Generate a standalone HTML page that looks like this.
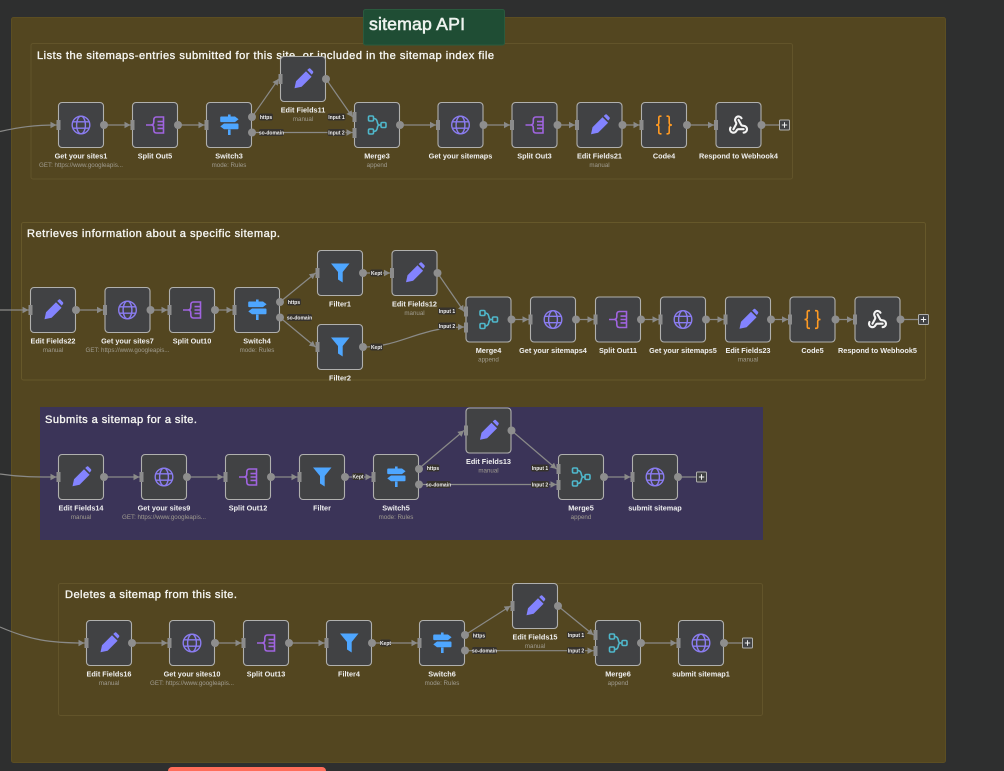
<!DOCTYPE html>
<html><head><meta charset="utf-8"><title>sitemap API</title>
<style>
html,body{margin:0;padding:0;background:#2e2f2f;width:1004px;height:771px;overflow:hidden}
svg{display:block}
text{font-family:"Liberation Sans",sans-serif}
.l{font-size:7.3px;font-weight:bold;fill:#f0f0f0;text-anchor:middle}
.s{font-size:6.2px;fill:#a09c90;text-anchor:middle}
.t{font-size:11.1px;fill:#f6f6f2;stroke:#f6f6f2;stroke-width:.35}
.p{font-size:5px;font-weight:bold;fill:#f0f0f0;text-anchor:middle}
.e{fill:none;stroke:#8a8a88;stroke-width:1.2;marker-end:url(#a)}
.x{fill:none;stroke:#8a8a88;stroke-width:1.2}
.r{fill:#36322c}
</style></head><body>
<svg width="1004" height="771" viewBox="0 0 1004 771" xmlns="http://www.w3.org/2000/svg">
<defs>
<marker id="a" markerUnits="userSpaceOnUse" markerWidth="6" markerHeight="7" refX="6" refY="3.5" orient="auto"><path d="M0 .3L6 3.5L0 6.700z" fill="#8a8a88"/></marker>
<g id="n">
<rect x=".5" y=".5" width="45" height="45" rx="3.5" fill="#414244" stroke="#b0b0ae" stroke-width="1.1"/>
<rect x="-1.5" y="18" width="4" height="10" fill="#8c8c8c"/>
<circle cx="46" cy="23" r="4" fill="#8e8e8e"/>
</g>
<g id="n2">
<rect x=".5" y=".5" width="45" height="45" rx="3.5" fill="#414244" stroke="#b0b0ae" stroke-width="1.1"/>
<rect x="-1.5" y="18" width="4" height="10" fill="#8c8c8c"/>
<circle cx="46" cy="15" r="4" fill="#8e8e8e"/>
<circle cx="46" cy="30.5" r="4" fill="#8e8e8e"/>
</g>
<g id="n3">
<rect x=".5" y=".5" width="45" height="45" rx="3.5" fill="#414244" stroke="#b0b0ae" stroke-width="1.1"/>
<rect x="-1.5" y="10" width="4" height="10" fill="#8c8c8c"/>
<rect x="-1.5" y="26" width="4" height="10" fill="#8c8c8c"/>
<circle cx="46" cy="23" r="4" fill="#8e8e8e"/>
</g>
<g id="G"><use href="#n"/><g fill="none" stroke="#8a7cf0" stroke-width="1.4"><circle cx="23" cy="23" r="8.8"/><ellipse cx="23" cy="23" rx="4.4" ry="8.8"/><path d="M15 19.8h16M15 26.2h16"/></g></g>
<g id="P"><use href="#n"/><path d="M14.5 32.3L16 25.2L26 15.3L31.6 20.8L21.6 30.8Z M27.2 14L28.6 12.7Q29.6 11.9 30.5 12.7L33 15.2Q33.7 16.1 33 17L31.7 18.6Z" fill="#8383ff"/></g>
<g id="S"><use href="#n"/><g fill="none" stroke="#a064e0" stroke-width="1.6"><path d="M14 23h5M19 23c2 0 2.800-1 2.800-3v-2c0-2 .8-3 2.700-3H31.500V31H24.500c-1.900 0-2.700-1-2.700-3v-2c0-2-.8-3-2.800-3"/><path d="M25.500 19.600h6M25.500 23h6M25.500 26.400h6"/></g></g>
<g id="W"><use href="#n2"/><g fill="#4ea6ff"><path d="M22 12.5h2.600v2H22zM22 27.500h2.600V33H22z"/><path d="M15.200 14.500H29l3.600 2.800-3.600 2.800H15.200q-1 0-1-1v-3.600q0-1 1-1z"/><path d="M31.500 21.500H18l-3.700 2.900 3.700 2.900h13.500q1 0 1-1v-3.800q0-1-1-1z"/></g></g>
<g id="M"><use href="#n3"/><g fill="none" stroke="#4fb7cb" stroke-width="1.6"><rect x="14.500" y="14" width="5" height="5" rx="1.2"/><rect x="14.500" y="27" width="5" height="5" rx="1.2"/><rect x="27" y="20.500" width="5" height="5" rx="1.2"/><path d="M19.500 16.500c2.500 0 3.500 1.500 3.800 3.500 .3 2 .7 3 2.700 3H27M19.500 29.500c2.500 0 3.500-1.500 3.800-3.500 .3-2 .7-3 2.700-3"/></g></g>
<g id="F"><use href="#n"/><path d="M14 13.500H32.500L25.700 22V32.500L21 29.500V22Z" fill="#4ea6ff"/></g>
<g id="C"><use href="#n"/><g fill="none" stroke="#ff9a22" stroke-width="1.6"><path d="M20.500 14.200h-1.200q-1.500 0-1.500 1.500V21q0 2-2.800 2 2.800 0 2.800 2v5.300q0 1.500 1.500 1.500h1.200"/><path d="M25.500 14.200h1.200q1.500 0 1.500 1.500V21q0 2 2.800 2-2.800 0-2.800 2v5.300q0 1.500-1.500 1.500h-1.200"/></g></g>
<g id="H"><use href="#n"/><g transform="translate(12.8 12.8) scale(.85)" fill="none" stroke="#f4f4f4" stroke-width="2.5" stroke-linecap="round" stroke-linejoin="round"><path d="M18 16.980h-5.990c-1.100 0-1.950.94-2.480 1.900A4 4 0 0 1 2 17c.01-.7.2-1.400.57-2"/><path d="m6 17 3.130-5.780c.53-.97.1-2.180-.5-3.100a4 4 0 1 1 6.890-4.060"/><path d="m12 6 3.130 5.730C15.660 12.700 16.900 13 18 13a4 4 0 0 1 0 8"/></g></g>
<g id="A"><rect x=".5" y=".5" width="10" height="10" rx="1" fill="#414244" stroke="#b0b0ae"/><path d="M2.800 5.500h5.400M5.500 2.800v5.400" stroke="#f0f0f0" stroke-width="1"/></g>
</defs>

<rect width="1004" height="771" fill="#2e2f2f"/>
<rect x="11.500" y="17.500" width="934" height="745" rx="2" fill="#534620" stroke="#5c4e22"/>
<rect x="31" y="43.500" width="761.500" height="135.500" rx="2" fill="#534620" stroke="#62542a"/>
<rect x="21.500" y="222.500" width="904" height="157.500" rx="2" fill="#534620" stroke="#66582a"/>
<rect x="40" y="407" width="723" height="133" fill="#3b3458"/>
<rect x="58.500" y="583.500" width="704" height="132" rx="2" fill="#534620" stroke="#62542a"/>
<rect x="363.500" y="9.500" width="141" height="35.500" rx="2" fill="#1f4d34" stroke="#2a5a3e"/>
<text x="369" y="30" font-size="17.700" fill="#eef3ef" stroke="#eef3ef" stroke-width=".55" textLength="96">sitemap API</text>
<rect x="168" y="767" width="158" height="12" rx="4" fill="#ff6d5a"/>

<text class="t" x="37" y="59" textLength="457">Lists the sitemaps-entries submitted for this site, or included in the sitemap index file</text>
<text class="t" x="27" y="237" textLength="253">Retrieves information about a specific sitemap.</text>
<text class="t" x="45" y="423" textLength="152">Submits a sitemap for a site.</text>
<text class="t" x="65" y="598" textLength="172">Deletes a sitemap from this site.</text>

<!-- edges row 1 -->
<path class="e" d="M0 131.500C20 127 35 125 56.500 125"/>
<path class="e" d="M104 125H130.500"/><path class="e" d="M178 125H204.500"/><path class="e" d="M400 125H436"/><path class="e" d="M483.700 125H510"/><path class="e" d="M557.700 125H575"/><path class="e" d="M622.500 125H639.500"/><path class="e" d="M687 125H714"/>
<path class="e" d="M252 117L278.500 79"/><path class="e" d="M326 79L352.500 117"/><path class="e" d="M252 132.500H352.500"/>
<path class="x" d="M761.500 125H779"/>
<!-- edges row 2 -->
<path class="e" d="M0 310H28.500"/>
<path class="e" d="M76 310H103"/><path class="e" d="M150.500 310H167.500"/><path class="e" d="M215 310H232.500"/>
<path class="e" d="M280 302L315.500 273"/><path class="e" d="M280 317.500L315.500 347"/>
<path class="e" d="M363 273H390"/><path class="e" d="M437.500 273L464 311.500"/>
<path class="e" d="M363 347C400 347 420 327 464 327"/>
<path class="e" d="M511.500 319.500H528.500"/><path class="e" d="M576 319.500H593.500"/><path class="e" d="M641 319.500H658.500"/><path class="e" d="M706 319.500H723.500"/><path class="e" d="M771 319.500H788"/><path class="e" d="M835.500 319.500H853"/>
<path class="x" d="M900.500 319.500H918"/>
<!-- edges row 3 -->
<path class="e" d="M0 474C20 477 35 477 56.500 477"/>
<path class="e" d="M104 477H139.500"/><path class="e" d="M187 477H223.500"/><path class="e" d="M271 477H297.500"/><path class="e" d="M345 477H371.500"/>
<path class="e" d="M419 468.500L464 430.500"/><path class="e" d="M511.500 430.500L556.500 469"/><path class="e" d="M419 484.500H556.500"/>
<path class="e" d="M604 477H630.500"/><path class="x" d="M678 477H696"/>
<!-- edges row 4 -->
<path class="e" d="M0 627C30 640 50 643 84.500 643"/>
<path class="e" d="M132 643H167.500"/><path class="e" d="M215 643H241.500"/><path class="e" d="M289 643H324.500"/><path class="e" d="M372 643H417.500"/>
<path class="e" d="M465 635L510.500 606"/><path class="e" d="M558 606L593.500 635"/><path class="e" d="M465 650.700H593.500"/>
<path class="e" d="M641 643H676.500"/><path class="x" d="M724 643H742"/>

<!-- nodes row 1 -->
<use href="#G" x="58" y="102"/><use href="#S" x="132" y="102"/><use href="#W" x="206" y="102"/><use href="#P" x="280" y="56"/><use href="#M" x="354" y="102"/><use href="#G" x="437.500" y="102"/><use href="#S" x="511.500" y="102"/><use href="#P" x="576.500" y="102"/><use href="#C" x="641" y="102"/><use href="#H" x="715.500" y="102"/><use href="#A" x="779" y="119.500"/>
<!-- nodes row 2 -->
<use href="#P" x="30" y="287"/><use href="#G" x="104.500" y="287"/><use href="#S" x="169" y="287"/><use href="#W" x="234" y="287"/><use href="#F" x="317" y="250"/><use href="#P" x="391.500" y="250"/><use href="#F" x="317" y="324"/><use href="#M" x="465.500" y="296.500"/><use href="#G" x="530" y="296.500"/><use href="#S" x="595" y="296.500"/><use href="#G" x="660" y="296.500"/><use href="#P" x="725" y="296.500"/><use href="#C" x="789.500" y="296.500"/><use href="#H" x="854.500" y="296.500"/><use href="#A" x="918" y="314"/>
<!-- nodes row 3 -->
<use href="#P" x="58" y="454"/><use href="#G" x="141" y="454"/><use href="#S" x="225" y="454"/><use href="#F" x="299" y="454"/><use href="#W" x="373" y="454"/><use href="#P" x="465.500" y="407.500"/><use href="#M" x="558" y="454"/><use href="#G" x="632" y="454"/><use href="#A" x="696" y="471.500"/>
<!-- nodes row 4 -->
<use href="#P" x="86" y="620"/><use href="#G" x="169" y="620"/><use href="#S" x="243" y="620"/><use href="#F" x="326" y="620"/><use href="#W" x="419" y="620"/><use href="#P" x="512" y="583"/><use href="#M" x="595" y="620"/><use href="#G" x="678" y="620"/><use href="#A" x="742" y="637.500"/>

<!-- pills -->
<rect class="r" x="259" y="113.500" width="14" height="7" rx="2"/><text class="p" x="266" y="118.800">https</text>
<rect class="r" x="259" y="129" width="25" height="7" rx="2"/><text class="p" x="271.500" y="134.300">so-domain</text>
<rect class="r" x="327.500" y="113.500" width="18" height="7" rx="2"/><text class="p" x="336.500" y="118.800">Input 1</text>
<rect class="r" x="327.500" y="129" width="18" height="7" rx="2"/><text class="p" x="336.500" y="134.300">Input 2</text>
<rect class="r" x="287" y="298.500" width="14" height="7" rx="2"/><text class="p" x="294" y="303.800">https</text>
<rect class="r" x="287" y="314" width="25" height="7" rx="2"/><text class="p" x="299.500" y="319.300">so-domain</text>
<rect class="r" x="370" y="269.500" width="13" height="7" rx="2"/><text class="p" x="376.500" y="274.800">Kept</text>
<rect class="r" x="370" y="343.500" width="13" height="7" rx="2"/><text class="p" x="376.500" y="348.800">Kept</text>
<rect class="r" x="438" y="307.500" width="18" height="7" rx="2"/><text class="p" x="447" y="312.800">Input 1</text>
<rect class="r" x="438" y="322.500" width="18" height="7" rx="2"/><text class="p" x="447" y="327.800">Input 2</text>
<rect class="r" x="352" y="473" width="12" height="7" rx="2"/><text class="p" x="358" y="478.300">Kept</text>
<rect class="r" x="426.500" y="464.500" width="13" height="7" rx="2"/><text class="p" x="433" y="469.800">https</text>
<rect class="r" x="426.500" y="481" width="24" height="7" rx="2"/><text class="p" x="438.500" y="486.300">so-domain</text>
<rect class="r" x="531" y="464.500" width="18" height="7" rx="2"/><text class="p" x="540" y="469.800">Input 1</text>
<rect class="r" x="531" y="481" width="18" height="7" rx="2"/><text class="p" x="540" y="486.300">Input 2</text>
<rect class="r" x="380" y="639.500" width="11" height="7" rx="2"/><text class="p" x="385.500" y="644.800">Kept</text>
<rect class="r" x="472" y="632" width="14" height="7" rx="2"/><text class="p" x="479" y="637.300">https</text>
<rect class="r" x="472" y="647" width="25" height="7" rx="2"/><text class="p" x="484.500" y="652.300">so-domain</text>
<rect class="r" x="567" y="631.500" width="18" height="7" rx="2"/><text class="p" x="576" y="636.800">Input 1</text>
<rect class="r" x="567" y="647" width="18" height="7" rx="2"/><text class="p" x="576" y="652.300">Input 2</text>

<!-- labels row 1 -->
<text class="l" x="81" y="158.500">Get your sites1</text><text class="s" x="81" y="167">GET: https://www.googleapis...</text>
<text class="l" x="155" y="158.500">Split Out5</text>
<text class="l" x="229" y="158.500">Switch3</text><text class="s" x="229" y="167">mode: Rules</text>
<text class="l" x="303" y="112.500">Edit Fields11</text><text class="s" x="303" y="121">manual</text>
<text class="l" x="377" y="158.500">Merge3</text><text class="s" x="377" y="167">append</text>
<text class="l" x="460.500" y="158.500">Get your sitemaps</text>
<text class="l" x="534.500" y="158.500">Split Out3</text>
<text class="l" x="599.500" y="158.500">Edit Fields21</text><text class="s" x="599.500" y="167">manual</text>
<text class="l" x="664" y="158.500">Code4</text>
<text class="l" x="738.500" y="158.500">Respond to Webhook4</text>
<!-- labels row 2 -->
<text class="l" x="53" y="343.500">Edit Fields22</text><text class="s" x="53" y="352">manual</text>
<text class="l" x="127.500" y="343.500">Get your sites7</text><text class="s" x="127.500" y="352">GET: https://www.googleapis...</text>
<text class="l" x="192" y="343.500">Split Out10</text>
<text class="l" x="257" y="343.500">Switch4</text><text class="s" x="257" y="352">mode: Rules</text>
<text class="l" x="340" y="306.500">Filter1</text>
<text class="l" x="414.500" y="306.500">Edit Fields12</text><text class="s" x="414.500" y="315">manual</text>
<text class="l" x="340" y="380.500">Filter2</text>
<text class="l" x="488.500" y="353">Merge4</text><text class="s" x="488.500" y="361.500">append</text>
<text class="l" x="553" y="353">Get your sitemaps4</text>
<text class="l" x="618" y="353">Split Out11</text>
<text class="l" x="683" y="353">Get your sitemaps5</text>
<text class="l" x="748" y="353">Edit Fields23</text><text class="s" x="748" y="361.500">manual</text>
<text class="l" x="812.500" y="353">Code5</text>
<text class="l" x="877.500" y="353">Respond to Webhook5</text>
<!-- labels row 3 -->
<text class="l" x="81" y="510.500">Edit Fields14</text><text class="s" x="81" y="519">manual</text>
<text class="l" x="164" y="510.500">Get your sites9</text><text class="s" x="164" y="519">GET: https://www.googleapis...</text>
<text class="l" x="248" y="510.500">Split Out12</text>
<text class="l" x="322" y="510.500">Filter</text>
<text class="l" x="396" y="510.500">Switch5</text><text class="s" x="396" y="519">mode: Rules</text>
<text class="l" x="488.500" y="464">Edit Fields13</text><text class="s" x="488.500" y="472.500">manual</text>
<text class="l" x="581" y="510.500">Merge5</text><text class="s" x="581" y="519">append</text>
<text class="l" x="655" y="510.500">submit sitemap</text>
<!-- labels row 4 -->
<text class="l" x="109" y="676.500">Edit Fields16</text><text class="s" x="109" y="685">manual</text>
<text class="l" x="192" y="676.500">Get your sites10</text><text class="s" x="192" y="685">GET: https://www.googleapis...</text>
<text class="l" x="266" y="676.500">Split Out13</text>
<text class="l" x="349" y="676.500">Filter4</text>
<text class="l" x="442" y="676.500">Switch6</text><text class="s" x="442" y="685">mode: Rules</text>
<text class="l" x="535" y="639.500">Edit Fields15</text><text class="s" x="535" y="648">manual</text>
<text class="l" x="618" y="676.500">Merge6</text><text class="s" x="618" y="685">append</text>
<text class="l" x="701" y="676.500">submit sitemap1</text>
</svg>
</body></html>
